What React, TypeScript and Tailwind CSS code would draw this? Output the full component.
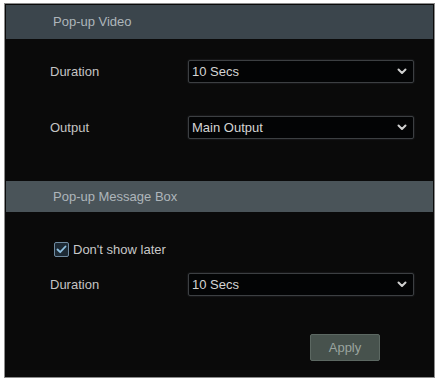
const font = { fontFamily: '"Liberation Sans", Arial, sans-serif' }

function Chevron() {
  return (
    <svg width="10" height="7" viewBox="0 0 10 7" className="shrink-0">
      <path d="M1.5 1.5 L5 5 L8.5 1.5" fill="none" stroke="#d0d0d0" strokeWidth="2" strokeLinecap="round" strokeLinejoin="round" />
    </svg>
  )
}

function SelectBox({ value }: { value: string }) {
  return (
    <div className="flex h-[23px] w-[226px] items-center justify-between rounded-[2px] border border-[#3c3f42] bg-[#030405] pl-[3px] pr-[6px] shadow-[0_0_2px_rgba(120,130,140,0.35)]">
      <span className="text-[13px] text-[#d4d4d4]">{value}</span>
      <Chevron />
    </div>
  )
}

function Row({ label, value }: { label: string; value: string }) {
  return (
    <div className="flex items-center">
      <span className="w-[182px] shrink-0 pl-[44px] text-[13px] text-[#c4c4c4]">{label}</span>
      <SelectBox value={value} />
    </div>
  )
}

function SectionHeader({ title, tall }: { title: string; tall?: boolean }) {
  return (
    <div
      className={
        tall
          ? 'flex h-[34px] items-center bg-[#3b454c] pl-[47px] text-[13px] text-[#aeb6bb]'
          : 'flex h-[31px] items-center bg-[#4a5459] pl-[47px] text-[13px] text-[#aeb6bb]'
      }
    >
      {title}
    </div>
  )
}

export default function App() {
  return (
    <div className="h-[381px] w-[437px] bg-white pl-[4px] pt-[3px]" style={font}>
      <div className="flex h-[375px] w-[431px] flex-col border border-[#8c8c8c] bg-[#0a0a0a] p-[1px]">
        <SectionHeader title="Pop-up Video" tall />

        <div className="mt-[21px]">
          <Row label="Duration" value="10 Secs" />
        </div>
        <div className="mt-[33px]">
          <Row label="Output" value="Main Output" />
        </div>

        <div className="mt-[42px]">
          <SectionHeader title="Pop-up Message Box" />
        </div>

        <div className="ml-[48px] mt-[30px] flex h-[15px] items-center gap-[4px]">
          <div className="flex h-[15px] w-[15px] items-center justify-center rounded-[2px] border border-[#6f8aa0] bg-[#1d2a35]">
            <svg width="11" height="9" viewBox="0 0 11 9">
              <path d="M1.5 4.5 L4.2 7.2 L9.5 1.5" fill="none" stroke="#8fc0e0" strokeWidth="1.8" strokeLinecap="round" strokeLinejoin="round" />
            </svg>
          </div>
          <span className="text-[13px] text-[#c8c8c8]">Don't show later</span>
        </div>

        <div className="mt-[16px]">
          <Row label="Duration" value="10 Secs" />
        </div>

        <div className="mt-[38px] flex pl-[304px]">
          <div className="flex h-[27px] w-[70px] items-center justify-center rounded-[2px] border border-[#5c6862] bg-[#47524d] text-[13px] text-[#9aa49f]">
            Apply
          </div>
        </div>
      </div>
    </div>
  )
}
